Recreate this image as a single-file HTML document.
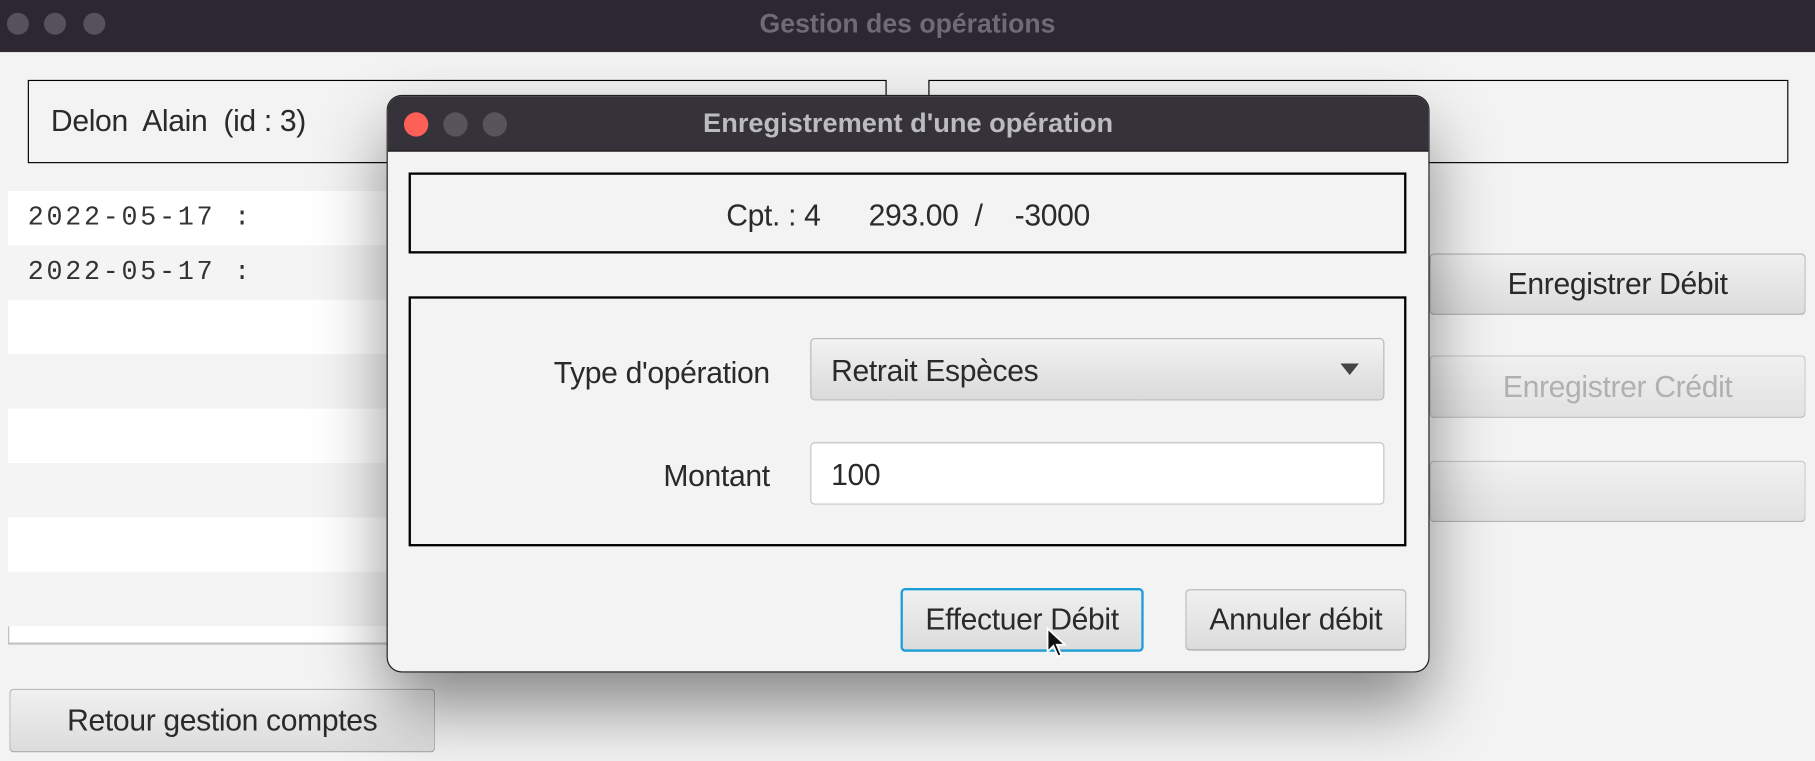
<!DOCTYPE html>
<html><head><meta charset="utf-8"><style>
*{box-sizing:border-box;margin:0;padding:0}
html,body{width:1815px;height:761px;overflow:hidden;background:#f3f3f3}
#s{position:absolute;left:0;top:0;width:1568px;height:657px;transform:scale(1.15753);transform-origin:0 0;font-family:"Liberation Sans",sans-serif;color:#2a2a2a;background:#f3f3f3}
.a{position:absolute}
.dot{position:absolute;width:19px;height:19px;border-radius:50%;background:#56515b}
.box{position:absolute;border:1.5px solid #000}
.t{font-size:26px;letter-spacing:-0.3px}
.btn{position:absolute;border:1px solid #b5b5b5;border-bottom-color:#a0a0a0;border-radius:4px;background:linear-gradient(#f0f0f0,#dcdcdc);font-size:26px;letter-spacing:-0.3px;display:flex;align-items:center;justify-content:center;color:#2a2a2a}
.row{position:absolute;left:7px;width:330px;height:47px}
.mono{font-family:"Liberation Mono",monospace;font-size:23px;letter-spacing:2.4px;position:absolute;left:17px;top:10px;color:#333}
</style></head><body><div id="s">
<div class="a" style="left:0;top:0;width:1568px;height:45px;background:#2c2731"></div>
<div class="dot" style="left:6px;top:11px"></div><div class="dot" style="left:38px;top:11px"></div><div class="dot" style="left:72px;top:11px"></div>
<div class="a" style="left:0;top:7px;width:1568px;text-align:center;font-size:23px;font-weight:bold;color:#6f6a74">Gestion des opérations</div>

<div class="box" style="left:24px;top:69px;width:742px;height:72px"></div>
<div class="a t" style="left:44px;top:89px">Delon&nbsp; Alain&nbsp; (id : 3)</div>
<div class="box" style="left:802px;top:69px;width:743px;height:72px"></div>

<div class="row" style="top:165px;background:#fff"><span class="mono">2022-05-17 :</span></div>
<div class="row" style="top:212px;background:#f4f4f4"><span class="mono">2022-05-17 :</span></div>
<div class="row" style="top:259px;background:#fff"></div>
<div class="row" style="top:306px;background:#f4f4f4"></div>
<div class="row" style="top:353px;background:#fff"></div>
<div class="row" style="top:400px;background:#f4f4f4"></div>
<div class="row" style="top:447px;background:#fff"></div>
<div class="row" style="top:494px;background:#f4f4f4"></div>
<div class="row" style="top:541px;height:16px;background:#fff;border-left:1px solid #bbb;border-bottom:2px solid #c4c4c4"></div>

<div class="btn" style="left:1235px;top:219px;width:325px;height:53px">Enregistrer Débit</div>
<div class="btn" style="left:1235px;top:307px;width:325px;height:54px;color:#9a9a9a;opacity:.75">Enregistrer Crédit</div>
<div class="btn" style="left:1235px;top:398px;width:325px;height:53px;opacity:.75"></div>
<div class="btn" style="left:8px;top:595px;width:368px;height:55px">Retour gestion comptes</div>

<div class="a" style="left:335px;top:83px;width:899px;height:497px;border-radius:12px;background:#f3f3f3;box-shadow:0 30px 60px rgba(0,0,0,.45),0 0 0 1px #222;overflow:hidden">
 <div class="a" style="left:0;top:0;width:899px;height:48px;background:#353239;border-bottom:1px solid #1a1a1a"></div>
 <div class="dot" style="left:14px;top:14px;width:21px;height:21px;background:#fe5f57"></div>
 <div class="dot" style="left:48px;top:14px;width:21px;height:21px;background:#57545c"></div>
 <div class="dot" style="left:82px;top:14px;width:21px;height:21px;background:#57545c"></div>
 <div class="a" style="left:0;top:10px;width:899px;text-align:center;font-size:23.5px;font-weight:bold;color:#bcbbbe">Enregistrement d'une opération</div>
 <div class="box" style="left:18px;top:66px;width:862px;height:70px;border-width:2px"></div>
 <div class="a t" style="left:0;top:88px;width:899px;text-align:center;white-space:pre">Cpt. : 4      293.00  /    -3000</div>
 <div class="box" style="left:18px;top:173px;width:862px;height:216px;border-width:2px"></div>
 <div class="a t" style="left:60px;top:224px;width:270px;text-align:right">Type d'opération</div>
 <div class="a" style="left:365px;top:209px;width:496px;height:54px;border:1px solid #b8b8b8;border-radius:4px;background:linear-gradient(#f2f2f2,#dadada)"></div>
 <div class="a t" style="left:383px;top:222px">Retrait Espèces</div>
 <div class="a" style="left:823px;top:231px;width:0;height:0;border-left:8px solid transparent;border-right:8px solid transparent;border-top:10px solid #444"></div>
 <div class="a t" style="left:60px;top:313px;width:270px;text-align:right">Montant</div>
 <div class="a" style="left:365px;top:299px;width:496px;height:54px;border:1px solid #c4c4c4;border-radius:4px;background:#fff"></div>
 <div class="a t" style="left:383px;top:312px">100</div>
 <div class="btn" style="left:443px;top:425px;width:210px;height:55px;border:2px solid #1b9ed8">Effectuer Débit</div>
 <div class="btn" style="left:689px;top:426px;width:191px;height:53px">Annuler débit</div>
 <svg class="a" style="left:568px;top:458px" width="20" height="30" viewBox="0 0 20 30"><path d="M2 2 L2 22 L7 17 L11 26 L14 25 L10 16 L17 16 Z" fill="#111" stroke="#fff" stroke-width="1.5"/></svg>
</div>
</div></body></html>
